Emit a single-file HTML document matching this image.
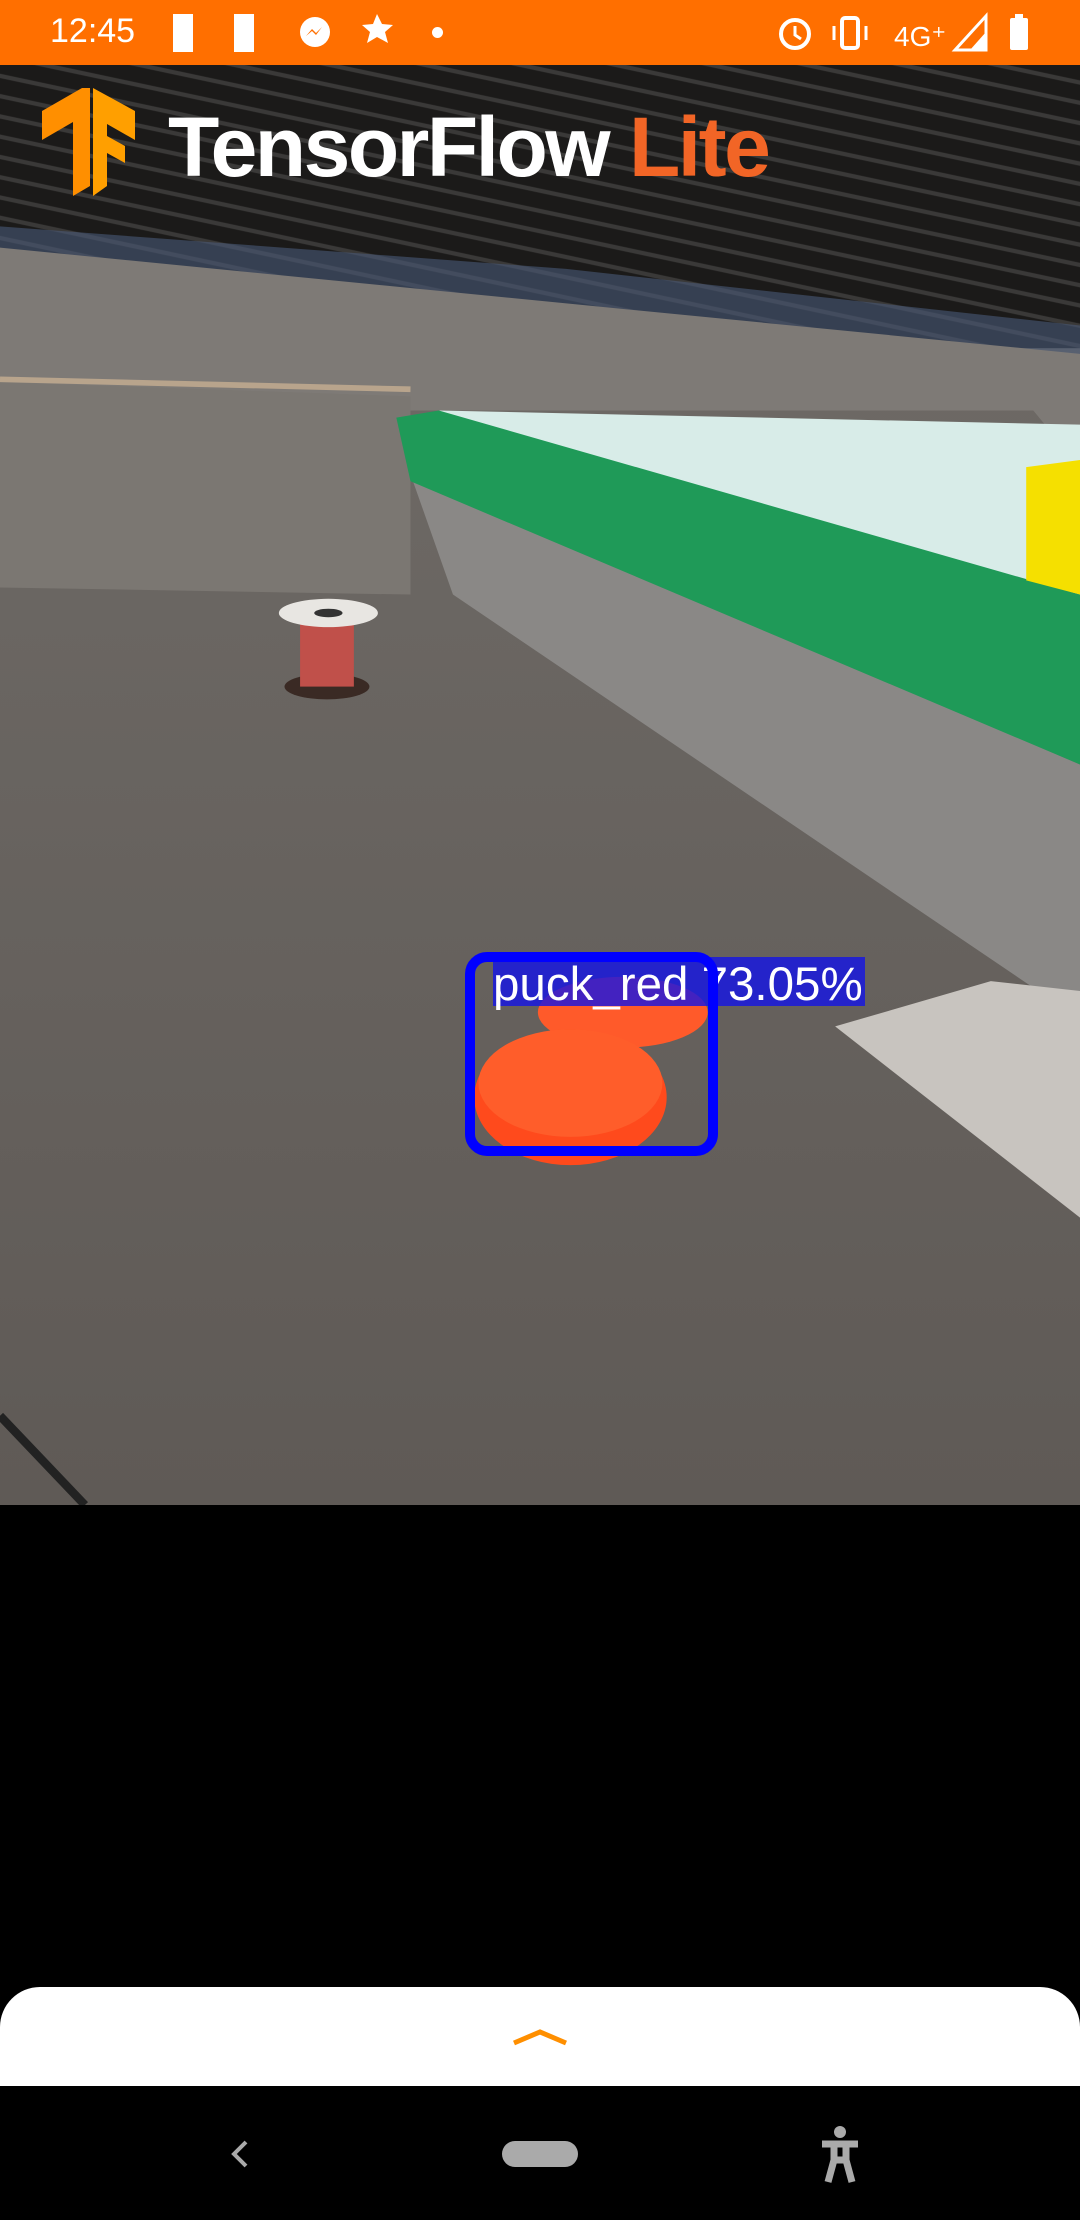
<!DOCTYPE html>
<html><head><meta charset="utf-8"><style>
body{margin:0;width:1080px;height:2220px;background:#000;position:relative;overflow:hidden;font-family:"Liberation Sans",sans-serif}
.sb{position:absolute;left:0;top:0;width:1080px;height:65px;background:#ff6f00;color:#fff}
.cam{position:absolute;left:0;top:65px;width:1080px;height:1440px}
.sheet{position:absolute;left:0;top:1987px;width:1080px;height:99px;background:#fff;border-radius:40px 40px 0 0}
</style></head><body>
<div class="sb">
<div style="position:absolute;left:50px;top:12px;font-size:34px">12:45</div>
<div style="position:absolute;left:173px;top:14px;width:20px;height:38px;background:#fff"></div>
<div style="position:absolute;left:234px;top:14px;width:20px;height:38px;background:#fff"></div>
<svg style="position:absolute;left:290px;top:12px" width="140" height="42" viewBox="0 0 140 42">
<circle cx="25" cy="20" r="15" fill="#fff"/><path d="M16 24l6-7 4 4 6-6-6 8-4-4z" fill="#ff6f00"/>
<path d="M87 2l5 10 11 1-8 7 3 11-11-6-10 6 3-11-8-7 11-1z" fill="#fff"/></svg>
<div style="position:absolute;left:432px;top:27px;width:11px;height:11px;border-radius:50%;background:#fff"></div>
<svg style="position:absolute;left:770px;top:12px" width="300" height="42" viewBox="0 0 300 42">
<circle cx="25" cy="22" r="14" fill="none" stroke="#fff" stroke-width="4"/><path d="M25 14v9l6 4" stroke="#fff" stroke-width="3" fill="none"/>
<rect x="72" y="6" width="16" height="30" rx="3" fill="none" stroke="#fff" stroke-width="4"/><path d="M64 14v14M96 14v14" stroke="#fff" stroke-width="3"/>
<text x="124" y="34" fill="#fff" font-size="28" font-family="Liberation Sans">4G⁺</text>
<path d="M185 38L216 4v34z" fill="none" stroke="#fff" stroke-width="3"/><path d="M200 38L216 20v18z" fill="#fff"/>
<rect x="240" y="6" width="18" height="32" rx="2" fill="#fff"/><rect x="245" y="2" width="8" height="5" fill="#fff"/></svg>
</div>
<svg class="cam" viewBox="0 46 763 1017" preserveAspectRatio="none">
<defs>
<pattern id="bl" width="40" height="14" patternUnits="userSpaceOnUse" patternTransform="rotate(12)"><rect width="40" height="14" fill="#1b1a19"/><rect y="9" width="40" height="3" fill="#3a3938"/></pattern>
<linearGradient id="cp" x1="0" y1="0" x2="0" y2="1"><stop offset="0" stop-color="#716d69"/><stop offset="1" stop-color="#5f5a56"/></linearGradient>
</defs>
<rect x="0" y="46" width="763" height="1017" fill="url(#cp)"/>
<rect x="0" y="46" width="763" height="200" fill="url(#bl)"/>
<path d="M0 160L400 190L763 230V270L0 190z" fill="#4a5a78" opacity="0.6"/>
<path d="M0 175L763 250V330L730 290H0z" fill="#7e7a76"/>
<path d="M0 270L290 280V420L0 415z" fill="#7b7772"/>
<path d="M0 268L290 275" stroke="#b8a48c" stroke-width="4"/>
<path d="M290 335L763 540V720L320 420z" fill="#8a8886"/>
<path d="M310 290L763 300V420L600 425z" fill="#d8ece8"/>
<path d="M280 295L310 290L763 420V540L290 340z" fill="#1f9a58"/>
<path d="M725 330L763 325V420L725 410z" fill="#f5e000"/>
<path d="M590 725L700 693L763 700V860z" fill="#c8c4bf"/>
<ellipse cx="231" cy="485" rx="30" ry="9" fill="#3a2a24"/>
<rect x="212" y="440" width="38" height="45" fill="#c0504a"/>
<ellipse cx="232" cy="433" rx="35" ry="10" fill="#e8e6e2"/><ellipse cx="232" cy="433" rx="10" ry="3" fill="#333"/>
<path d="M0 1000L60 1063" stroke="#222" stroke-width="6"/>
<ellipse cx="440" cy="715" rx="60" ry="25" fill="#ff5a2a"/>
<ellipse cx="403" cy="775" rx="68" ry="48" fill="#ff4a1c"/>
<ellipse cx="403" cy="765" rx="65" ry="38" fill="#ff5d2a"/>
</svg>
<div style="position:absolute;left:493px;top:957px;width:372px;height:49px;background:rgba(20,20,230,0.8)"></div>
<div style="position:absolute;left:493px;top:955px;font-size:47.5px;color:#fff;line-height:60px;white-space:nowrap">puck_red 73.05%</div>
<div style="position:absolute;left:465px;top:952px;width:233px;height:184px;border:10px solid #0000ff;border-radius:22px"></div>
<svg style="position:absolute;left:42px;top:88px" width="105" height="110" viewBox="0 0 105 110">
<path d="M40 0L0 23V52L31 34V108L48 98V0z" fill="#ff8f00"/><path d="M51 0L93 23V52L65 36V48L83 58V75L65 65V98L51 108z" fill="#ff9f00"/></svg>
<div style="position:absolute;left:168px;top:100px;font-size:84px;font-weight:bold;color:#fff;letter-spacing:-2.5px;line-height:95px;white-space:nowrap">TensorFlow <span style="color:#f26526">Lite</span></div>
<div class="sheet"><svg style="position:absolute;left:510px;top:40px" width="60" height="20"><path d="M4 16L30 5L56 16" stroke="#ff8f00" stroke-width="5" fill="none"/></svg></div>
<svg style="position:absolute;left:0;top:2086px" width="1080" height="134">
<path d="M246 56L234 68L246 80" stroke="#aaa" stroke-width="4" fill="none"/>
<rect x="502" y="55" width="76" height="26" rx="13" fill="#aaa"/>
<circle cx="840" cy="46" r="6" fill="#aaa"/><path d="M822 58h36M834 58v16l-6 22M846 58v16l6 22M834 74h12" stroke="#aaa" stroke-width="7" fill="none"/>
</svg>
</body></html>
